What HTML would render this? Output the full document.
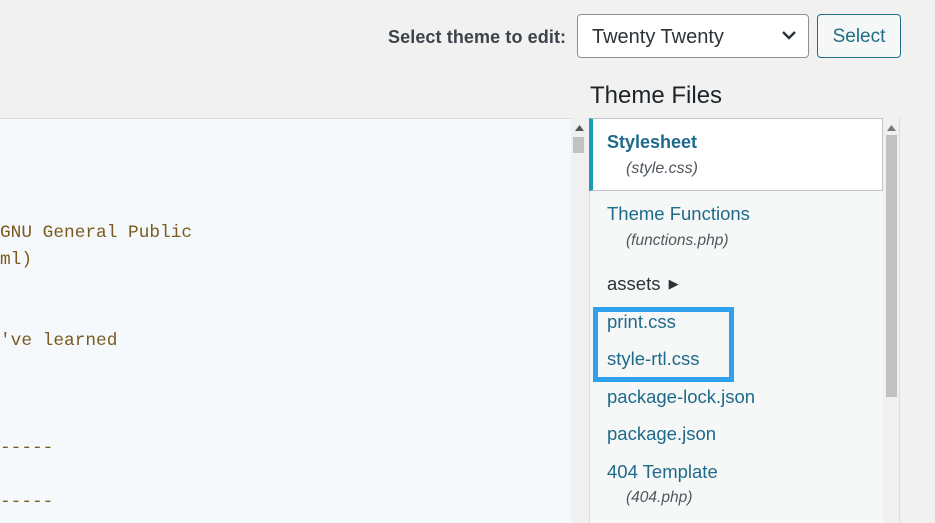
<!DOCTYPE html>
<html><head><meta charset="utf-8"><style>
*{margin:0;padding:0;box-sizing:border-box}
body{width:935px;height:523px;overflow:hidden;background:#f1f1f1;font-family:"Liberation Sans",sans-serif;position:relative}
.abs{position:absolute}
.lbl{left:388px;top:27px;font-size:18px;font-weight:bold;color:#3c434a;letter-spacing:0.1px}
.sel{left:577px;top:14px;width:232px;height:44px;border:1px solid #8c8f94;border-radius:4px;background:#fff;font-size:20px;color:#2c3338;padding:11px 0 0 14px}
.btn{left:817px;top:14px;width:84px;height:44px;border:1px solid #1f6f86;border-radius:4px;background:#f6f7f7;font-size:19px;color:#1f6f86;text-align:center;padding-top:11px}
.h{left:590px;top:82px;font-size:24px;color:#1d2327}
.ed{left:0;top:118px;width:571px;height:405px;background:#f6f9fb;border-top:1px solid #dcdcde}
.code{font-family:"Liberation Mono",monospace;font-size:17.8px;color:#7a5a1e;left:0}
.sb{left:571px;top:118px;width:17px;height:405px;background:#f0f0f0}
.list{left:589px;top:118px;width:295px;height:405px;background:#f6f7f7;border-left:1px solid #dcdcde}
.sb2{left:883px;top:118px;width:17px;height:405px;background:#f0f0f0;border-right:1px solid #dcdcde}
.it{font-size:18.5px;color:#1e6a8a;left:607px}
.sub{font-size:15.5px;font-style:italic;color:#50575e;left:626px}
</style></head><body>
<div class="abs lbl">Select theme to edit:</div>
<div class="abs sel">Twenty Twenty
<svg class="abs" style="left:203px;top:14px" width="16" height="12" viewBox="0 0 16 12"><path d="M2 3 L8 9 L14 3" stroke="#2c3338" stroke-width="2.4" fill="none"/></svg></div>
<div class="abs btn">Select</div>
<div class="abs h">Theme Files</div>
<div class="abs ed"></div>
<div class="abs code" style="top:223px">GNU General Public</div>
<div class="abs code" style="top:250px">ml)</div>
<div class="abs code" style="top:331px">'ve learned</div>
<div class="abs code" style="top:438px">-----</div>
<div class="abs code" style="top:492px">-----</div>
<div class="abs sb"><svg class="abs" style="left:4px;top:7px" width="9" height="6"><path d="M0 6 L4.5 0 L9 6Z" fill="#555"/></svg><div class="abs" style="left:2px;top:19px;width:11px;height:16px;background:#c1c1c1"></div></div>
<div class="abs list"></div>
<div class="abs" style="left:589px;top:118px;width:294px;height:73px;background:#fff;border:1px solid #c3c4c7;border-left:4px solid #1e9ab5"></div>
<div class="abs it" style="top:132px;font-weight:bold;font-size:18px">Stylesheet</div>
<div class="abs sub" style="top:160px;font-size:16px">(style.css)</div>
<div class="abs it" style="top:203px">Theme Functions</div>
<div class="abs sub" style="top:232px">(functions.php)</div>
<div class="abs" style="left:607px;top:273px;font-size:18.5px;color:#2c3338">assets <span style="font-size:13px;position:relative;top:-2px;left:3px">&#9654;</span></div>
<div class="abs it" style="top:311px">print.css</div>
<div class="abs it" style="top:348px">style-rtl.css</div>
<div class="abs it" style="top:386px">package-lock.json</div>
<div class="abs it" style="top:423px">package.json</div>
<div class="abs it" style="top:461px">404 Template</div>
<div class="abs sub" style="top:489px">(404.php)</div>
<div class="abs" style="left:593px;top:307px;width:141px;height:75px;border:5px solid #2ea2ef"></div>
<div class="abs sb2"><svg class="abs" style="left:4px;top:7px" width="9" height="6"><path d="M0 6 L4.5 0 L9 6Z" fill="#777"/></svg><div class="abs" style="left:3px;top:17px;width:11px;height:262px;background:#c1c1c1"></div></div>
</body></html>
